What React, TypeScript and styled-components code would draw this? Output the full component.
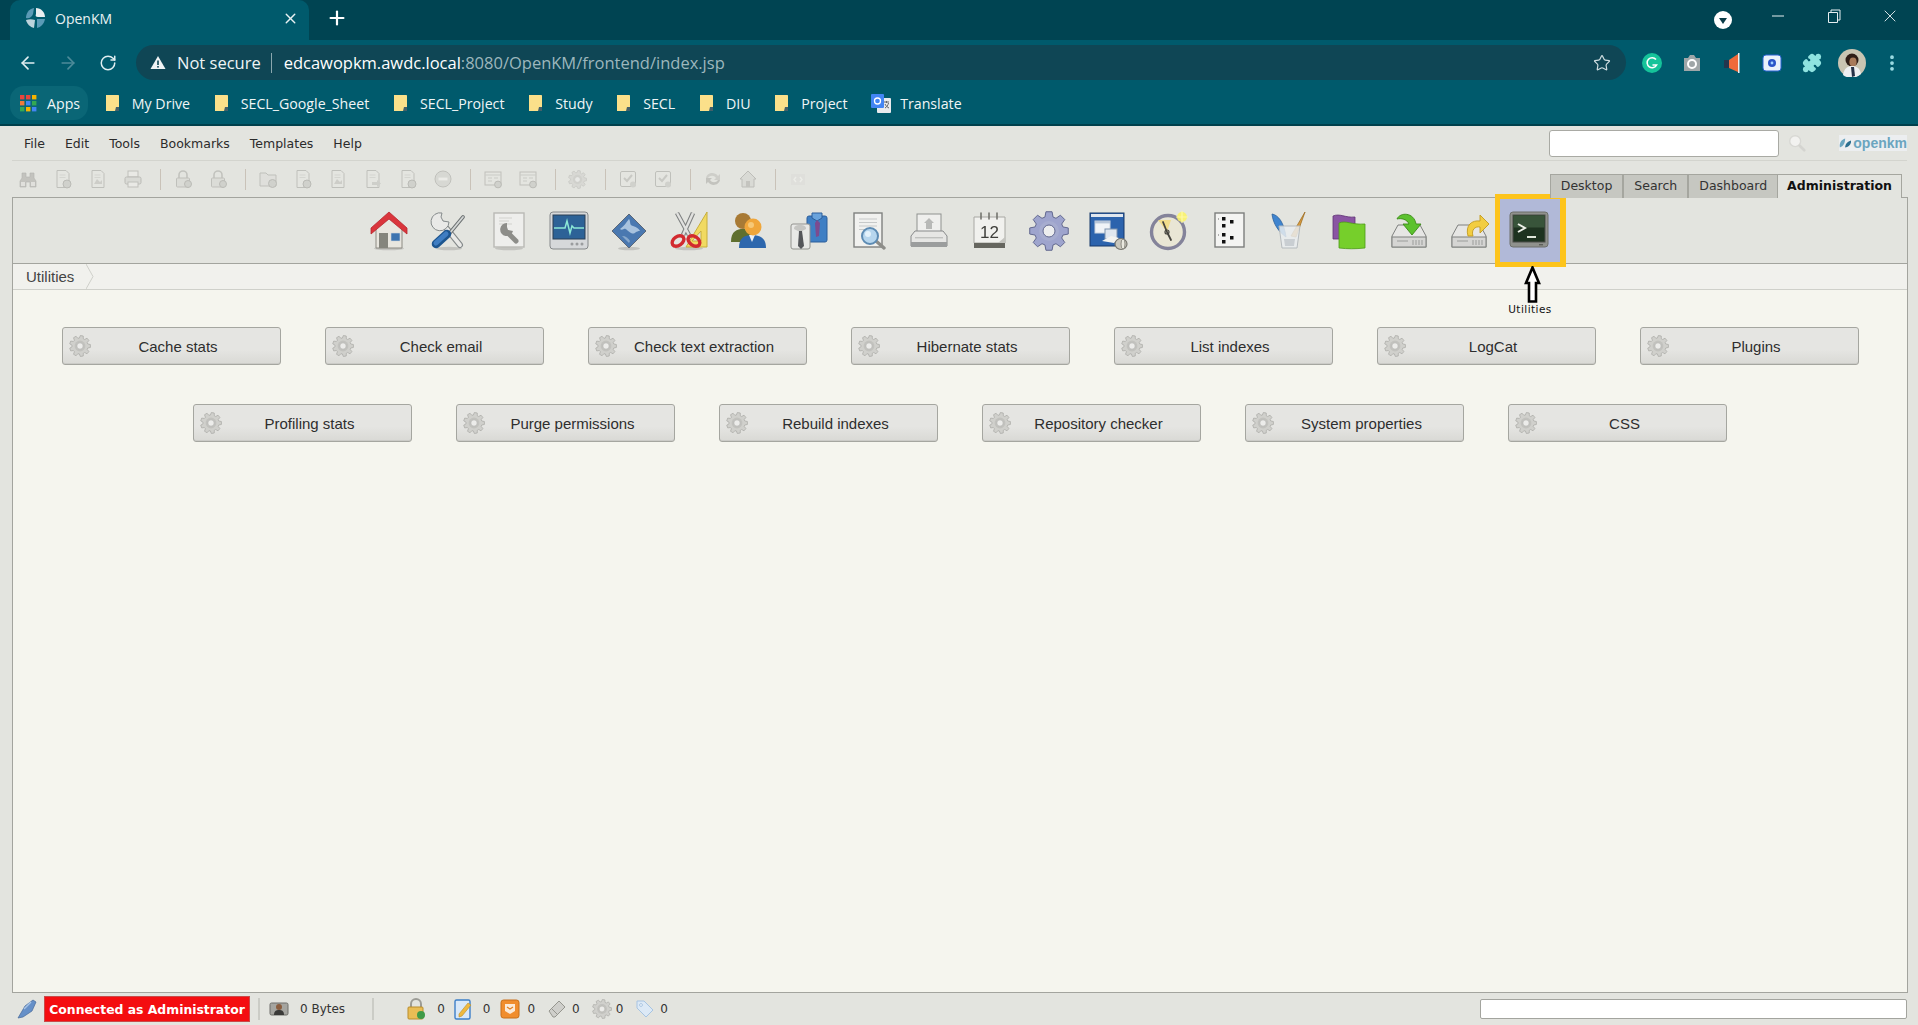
import React from "react";
import styled, { createGlobalStyle } from "styled-components";
import { ArrowLeft, ArrowRight, MoreVertical, Plus, Puzzle, RotateCw, Star, X } from "lucide-react";

const GlobalStyle = createGlobalStyle`
  html, body {
    margin: 0;
    height: 100%;
    overflow: hidden;
    background: #e3e4df;
  }
  #root {
    height: 100vh;
    display: flex;
    flex-direction: column;
  }
`;

const chromeFont = `"Open Sans", "Noto Sans", sans-serif`;
const appFont = `"DejaVu Sans", sans-serif`;

/* browser chrome */

const TabStrip = styled.div`
  height: 40px;
  flex: none;
  display: flex;
  align-items: stretch;
  background: #004452;
  font-family: ${chromeFont};
`;

const BrowserTab = styled.div`
  width: 299px;
  margin-left: 10px;
  padding: 0 10px 4px 14px;
  box-sizing: border-box;
  display: flex;
  align-items: center;
  gap: 9px;
  border-radius: 10px 10px 0 0;
  background: #005a6c;
  color: #e8f1f3;
  font-size: 14px;
`;

const TabTitle = styled.span`
  flex: 1;
`;

const NewTab = styled.div`
  width: 56px;
  display: flex;
  align-items: center;
  justify-content: center;
  padding-bottom: 4px;
  color: #fff;
`;

const WindowControls = styled.div`
  margin-left: auto;
  display: flex;
  align-items: center;
  color: #e6eff1;
`;

const ProfileCaret = styled.div`
  width: 18px;
  height: 18px;
  margin-right: 18px;
  border-radius: 50%;
  background: #fff;
  display: flex;
  align-items: center;
  justify-content: center;
  &::after {
    content: "";
    border-left: 4px solid transparent;
    border-right: 4px solid transparent;
    border-top: 6px solid #0a3c48;
    margin-top: 2px;
  }
`;

const WindowButton = styled.div`
  width: 56px;
  height: 30px;
  margin-bottom: 8px;
  display: flex;
  align-items: center;
  justify-content: center;
`;

const NavBar = styled.div`
  height: 45px;
  flex: none;
  display: flex;
  align-items: center;
  background: #005a6c;
  color: #fff;
  font-family: ${chromeFont};
`;

const NavButton = styled.div<{ $dim?: boolean; $first?: boolean }>`
  width: 40px;
  margin-left: ${({ $first }) => ($first ? 8 : 0)}px;
  display: flex;
  justify-content: center;
  color: ${({ $dim }) => ($dim ? "#4d8b99" : "#dfeef1")};
`;

const AddressBar = styled.div`
  width: 1490px;
  margin-left: 8px;
  height: 35px;
  padding: 0 15px 0 14px;
  box-sizing: border-box;
  display: flex;
  align-items: center;
  border-radius: 18px;
  background: #0f4655;
  font-size: 16.5px;
  white-space: nowrap;
`;

const NotSecure = styled.span`
  margin-left: 11px;
  color: #eef4f5;
`;

const AddressDivider = styled.span`
  width: 1px;
  height: 20px;
  margin: 0 12px 0 10px;
  background: #8aa7ae;
`;

const Host = styled.span`
  color: #fff;
`;

const UrlRest = styled.span`
  color: #9db7bd;
`;

const StarSlot = styled.div`
  margin-left: auto;
  display: flex;
  color: #cfdde0;
`;

const ExtensionSlots = styled.div`
  margin-left: 6px;
  display: flex;
`;

const ExtensionSlot = styled.div`
  width: 40px;
  display: flex;
  align-items: center;
  justify-content: center;
`;

const BookmarksBar = styled.div`
  height: 41px;
  flex: none;
  display: flex;
  align-items: center;
  padding: 0 0 3px 10px;
  box-sizing: border-box;
  gap: 23.7px;
  background: #005a6c;
  border-bottom: 2px solid #00404c;
  color: #f0f6f7;
  font-family: ${chromeFont};
  font-size: 14.2px;
`;

const Bookmark = styled.div<{ $apps?: boolean; $tight?: boolean }>`
  display: flex;
  align-items: center;
  gap: ${({ $tight }) => ($tight ? 9 : 12)}px;
  white-space: nowrap;
  ${({ $apps }) =>
    $apps &&
    `
    gap: 10px;
    height: 34px;
    padding: 0 8px 0 10px;
    margin-right: -7px;
    border-radius: 14px;
    background: #0a6676;
  `}
`;

/* application */

const MenuRow = styled.div`
  height: 34px;
  flex: none;
  margin: 0 11px 0 12px;
  display: flex;
  align-items: center;
  border-bottom: 1px solid #d3d4ce;
  font-family: ${appFont};
  font-size: 12.5px;
  color: #2b2b2b;
`;

const MenuList = styled.div`
  display: flex;
  gap: 20px;
  padding-left: 12px;
`;

const SearchBox = styled.div`
  margin-left: auto;
  width: 230px;
  height: 27px;
  box-sizing: border-box;
  border: 1px solid #a9aaa4;
  border-radius: 3px;
  background: #fff;
`;

const SearchGlyph = styled.div`
  width: 36px;
  margin-right: 24px;
  display: flex;
  justify-content: center;
`;

const Logo = styled.div`
  width: 68px;
  display: flex;
  align-items: center;
  gap: 2px;
  font-family: "Liberation Sans", sans-serif;
  font-size: 14px;
  font-weight: 700;
  color: #6ba5bf;
  background: #eceef0;
`;

const ToolRow = styled.div`
  height: 36px;
  flex: none;
  display: flex;
  align-items: center;
  padding-left: 10px;
`;

const ToolCell = styled.div`
  width: 35px;
  display: flex;
  justify-content: center;
  opacity: 0.55;
`;

const ToolSep = styled.div`
  width: 1px;
  height: 21px;
  margin: 0 4.5px 0 9.5px;
  background: #c9c2b8;
`;

const TabBar = styled.div`
  margin-left: auto;
  margin-right: 16px;
  align-self: flex-end;
  display: flex;
`;

const ModeTab = styled.div<{ $active?: boolean }>`
  height: 24px;
  padding: 0 ${({ $active }) => ($active ? 9 : 10)}px 2px;
  display: flex;
  align-items: center;
  box-sizing: border-box;
  border: 1px solid #a5a69f;
  border-bottom: none;
  border-left-width: ${({ $active }) => ($active ? 0 : 1)}px;
  background: ${({ $active }) => ($active ? "#e3e4df" : "#c6c7c1")};
  font-family: ${appFont};
  font-size: 12.5px;
  font-weight: ${({ $active }) => ($active ? 700 : 400)};
  color: ${({ $active }) => ($active ? "#111" : "#333")};
  margin-bottom: -1px;
  position: relative;
  z-index: 1;
`;

const Panel = styled.div`
  flex: 1;
  min-height: 0;
  margin: 0 10px 0 12px;
  display: flex;
  flex-direction: column;
  border: 1px solid #a3a49e;
  background: #f5f5ee;
`;

const AdminBar = styled.div`
  height: 65px;
  flex: none;
  padding-right: 2px;
  display: flex;
  justify-content: center;
  background: #e3e4df;
  border-bottom: 1px solid #a3a49e;
`;

const AdminCell = styled.div`
  width: 60px;
  position: relative;
  display: flex;
  align-items: center;
  justify-content: center;
`;

const AdminGlyph = styled.div`
  position: relative;
  z-index: 1;
  display: flex;
  filter: blur(0.35px);
`;

const Highlight = styled.div`
  position: absolute;
  left: -4px;
  top: -4px;
  width: 71px;
  height: 73px;
  box-sizing: border-box;
  border: 5px solid #fdc41c;
  border-right-width: 6px;
  background: #b1b9d8;
`;

const CalloutArrow = styled.svg`
  position: absolute;
  left: 25px;
  top: 68px;
  z-index: 2;
`;

const CalloutLabel = styled.div`
  position: absolute;
  left: 1px;
  right: -1px;
  top: 105px;
  z-index: 2;
  text-align: center;
  font-family: ${appFont};
  font-size: 10.5px;
  letter-spacing: 0.45px;
  color: #111;
`;

const Crumbs = styled.div`
  height: 25px;
  flex: none;
  display: flex;
  align-items: center;
  padding-left: 13px;
  gap: 12px;
  background: #f1f1ed;
  border-bottom: 1px solid #cfd0ca;
  font-family: "Liberation Sans", sans-serif;
  font-size: 15px;
  color: #444;
`;

const UtilityGrid = styled.div`
  padding: 37px 40px 0;
  display: flex;
  flex-wrap: wrap;
  justify-content: center;
  align-content: flex-start;
  gap: 39px 44px;
`;

const UtilityButton = styled.div`
  width: 219px;
  height: 38px;
  padding-right: 22px;
  box-sizing: border-box;
  display: grid;
  grid-template-columns: 36px 1fr;
  align-items: center;
  border: 1px solid #a5a6a0;
  border-radius: 3px;
  background: linear-gradient(#e5e5e2 60%, #d9d9d5);
  box-shadow: inset 0 -1px 0 #cbcbc7;
  font-family: "Liberation Sans", sans-serif;
  font-size: 15px;
  color: #2e2e2e;
  text-align: center;
  svg {
    justify-self: end;
    margin-right: 8px;
  }
`;

const StatusBar = styled.div`
  height: 32px;
  flex: none;
  display: flex;
  align-items: center;
  font-family: ${appFont};
  font-size: 12px;
  color: #333;
`;

const PlugSlot = styled.div`
  width: 44px;
  display: flex;
  justify-content: center;
  padding-left: 10px;
  box-sizing: border-box;
`;

const ConnectedBadge = styled.div`
  width: 206px;
  height: 26px;
  display: flex;
  align-items: center;
  justify-content: center;
  box-sizing: border-box;
  border: 1px solid #c94a4a;
  background: #f40d10;
  color: #fff;
  font-size: 12.4px;
  font-weight: 700;
  white-space: nowrap;
`;

const StatusSep = styled.div<{ $before: number; $after: number }>`
  width: 2px;
  height: 22px;
  margin: 0 ${({ $after }) => $after}px 0 ${({ $before }) => $before}px;
  background: #cbccc6;
`;

const StatusItem = styled.div<{ $gap: number; $next: number }>`
  display: flex;
  align-items: center;
  gap: ${({ $gap }) => $gap}px;
  margin-right: ${({ $next }) => $next}px;
`;

const StatusInput = styled.div`
  margin-left: auto;
  margin-right: 11px;
  width: 427px;
  height: 20px;
  box-sizing: border-box;
  border: 1px solid #a3a49e;
  border-radius: 2px;
  background: #fff;
`;

/* drawings */

const gearPath = (c: number, outer: number, inner: number, teeth: number) => {
  const parts: string[] = [];
  const step = (Math.PI * 2) / teeth;
  const pt = (r: number, a: number) => `${(c + r * Math.cos(a)).toFixed(2)} ${(c + r * Math.sin(a)).toFixed(2)}`;
  for (let i = 0; i < teeth; i++) {
    const a = i * step;
    parts.push(pt(inner, a - step * 0.36), pt(outer, a - step * 0.2), pt(outer, a + step * 0.2), pt(inner, a + step * 0.36));
  }
  return `M${parts.join("L")}Z`;
};

const GearGlyph = ({ size = 22 }: { size?: number }) => (
  <svg width={size} height={size} viewBox="0 0 22 22">
    <path d={gearPath(11, 10.5, 8, 9)} fill="#d0d0cc" stroke="#adada9" strokeWidth="0.8" />
    <circle cx="11" cy="11" r="5.4" fill="#c2c2be" />
    <circle cx="11" cy="11" r="3.2" fill="#ececea" stroke="#adada9" strokeWidth="0.6" />
  </svg>
);

const Shadow = ({ rx = 15 }: { rx?: number }) => <ellipse cx="20" cy="37.5" rx={rx} ry="1.8" fill="#000" opacity="0.14" />;

const Svg40 = ({ children }: { children: React.ReactNode }) => (
  <svg width="40" height="40" viewBox="0 0 40 40">
    {children}
  </svg>
);

const adminIcons: React.ReactNode[] = [
  <Svg40 key="home">
    <Shadow />
    <path d="M7 17 20 7 33 17V37H7Z" fill="#e8e6df" stroke="#8c8a82" />
    <rect x="10" y="22" width="9" height="15" fill="#85857d" />
    <rect x="22" y="22" width="9" height="8" fill="#3d74b0" stroke="#cfd6dc" strokeWidth="0.6" />
    <path d="M20 1 38 17 38 23 20 8 2 23 2 17Z" fill="#da353c" stroke="#b5272d" strokeWidth="0.8" />
  </Svg40>,
  <Svg40 key="tools">
    <Shadow rx={13} />
    <path d="M31 34 14 13" stroke="#84898a" strokeWidth="6" strokeLinecap="round" />
    <path d="M31 34 14 13" stroke="#e9e9e7" strokeWidth="3.8" strokeLinecap="round" />
    <path d="M13 2a9 9 0 1 0 7 9l-6-1-2-4z" fill="#e9e9e7" stroke="#84898a" />
    <path d="M20 23 34 6" stroke="#6c7172" strokeWidth="3.6" strokeLinecap="round" />
    <path d="M20 23 34 6" stroke="#d4d7d6" strokeWidth="1.8" strokeLinecap="round" />
    <path d="M7 33 18 23" stroke="#1d558f" strokeWidth="8.5" strokeLinecap="round" />
    <path d="M7 32 17 23" stroke="#3f7dc2" strokeWidth="5" strokeLinecap="round" />
  </Svg40>,
  <Svg40 key="report">
    <Shadow rx={14} />
    <rect x="5" y="2" width="30" height="34" fill="#eeeeec" stroke="#b9b9b5" strokeWidth="1.4" />
    <path d="M10 7h13M10 10h10M10 13h13" stroke="#d2d2ce" strokeWidth="1.2" />
    <path d="M27 30 19 22" stroke="#8d8d89" strokeWidth="5" strokeLinecap="round" />
    <path d="M18 12a6.5 6.5 0 1 0 6 8l-5-1-1-3z" fill="#8d8d89" />
  </Svg40>,
  <Svg40 key="monitor">
    <rect x="1" y="1" width="38" height="37" rx="3" fill="#d6d8da" stroke="#85888a" />
    <rect x="4" y="4" width="32" height="24" fill="#2d6297" stroke="#2a3f55" />
    <path d="M5 17h11l2-7 3 12 2-7 2 2h10" fill="none" stroke="#8be8d6" strokeWidth="1.5" />
    <circle cx="23" cy="33" r="1.5" fill="#9a9c9e" />
    <circle cx="28" cy="33" r="1.5" fill="#9a9c9e" />
    <circle cx="33" cy="33" r="1.5" fill="#9a9c9e" />
  </Svg40>,
  <Svg40 key="diamond">
    <Shadow rx={11} />
    <path d="M20 3 37 20 20 37 3 20Z" fill="#4a78b0" stroke="#5d6877" />
    <path d="M20 8c2 3 0 6 4 7s6 3 7 5c-5 0-5 4-9 2s-5-5-7-4-3 1-4 0c4-3 6-6 9-10Z" fill="#a8c2de" />
    <path d="M13 25c4 0 6 2 8 5l-1 2-7-7Z" fill="#88a8cb" />
  </Svg40>,
  <Svg40 key="cut">
    <Shadow rx={14} />
    <path d="M38 1V36H17Z" fill="#f1da62" stroke="#c7ae3c" />
    <path d="M32 20V30H23Z" fill="#e3e4df" stroke="#c7ae3c" />
    <path d="M8 2 20 24M24 2 14 24" stroke="#7e8080" strokeWidth="4.5" />
    <path d="M8 2 20 24M24 2 14 24" stroke="#e1e1df" strokeWidth="2.4" />
    <ellipse cx="9" cy="30" rx="6.5" ry="4.4" transform="rotate(-35 9 30)" fill="none" stroke="#d22a2f" strokeWidth="3.4" />
    <ellipse cx="25" cy="30" rx="6.5" ry="4.4" transform="rotate(35 25 30)" fill="none" stroke="#d22a2f" strokeWidth="3.4" />
  </Svg40>,
  <Svg40 key="users">
    <circle cx="14" cy="10" r="8" fill="#a87a35" />
    <path d="M2 31c0-11 6-13 12-13s12 2 12 13Z" fill="#5f6f2e" />
    <path d="M10 37c0-10 5-13 13-13s14 3 14 13Z" fill="#2d67ad" />
    <path d="M20 24h6l-3 7Z" fill="#eef0f3" />
    <circle cx="24" cy="16" r="8.5" fill="#f0a63a" />
    <circle cx="22" cy="14" r="3" fill="#f6c877" />
  </Svg40>,
  <Svg40 key="shirts">
    <rect x="18" y="5" width="20" height="26" rx="2" fill="#3f7fc4" stroke="#2d5f9b" />
    <path d="M23 2h10v5l-5 3-5-3Z" fill="#6aa3dc" stroke="#2d5f9b" />
    <path d="M28 9l-2 3 1 14 3-1 1-13Z" fill="#7d4b8f" />
    <rect x="2" y="13" width="19" height="25" rx="2" fill="#e8e8e6" stroke="#92928e" />
    <path d="M11 14c-4 0-6 1-6 4l6 3 6-3c0-3-2-4-6-4Z" fill="#c5c5c2" />
    <path d="M10 20h3l2 15-3 3-3-3Z" fill="#55565a" />
  </Svg40>,
  <Svg40 key="lookup">
    <rect x="5" y="2" width="28" height="34" fill="#f1f1ef" stroke="#7f817f" strokeWidth="1.4" />
    <path d="M10 8h18M10 11.5h18M10 15h18M10 18.5h10" stroke="#c7c9c9" />
    <path d="M27 30 35 37" stroke="#8d8d89" strokeWidth="3.4" strokeLinecap="round" />
    <circle cx="21" cy="25" r="8" fill="#b7d6ee" stroke="#5d8bb3" strokeWidth="2" />
    <circle cx="19" cy="23" r="3" fill="#e3f1fb" />
  </Svg40>,
  <Svg40 key="scanner">
    <rect x="8" y="3" width="24" height="20" fill="#efefed" stroke="#8f918f" />
    <path d="M20 7 25 12H23V18H17V12H15Z" fill="#b8b9b7" />
    <path d="M6 20H34L38 25V35H2V25Z" fill="#e6e6e4" stroke="#87898a" />
    <rect x="2" y="31" width="36" height="5" fill="#9b9d9d" />
    <rect x="6" y="26" width="28" height="1.4" fill="#bfc0be" />
  </Svg40>,
  <Svg40 key="calendar">
    <path d="M5 6H36V32H5Z" fill="#f1f1ee" stroke="#a8a8a3" />
    <path d="M5 32H36V37H5Z" fill="#66665f" />
    <path d="M12 2v6M20 2v6M28 2v6" stroke="#6e6e68" strokeWidth="1.5" strokeLinecap="round" />
    <text x="20.5" y="27" textAnchor="middle" fontFamily="Liberation Sans, sans-serif" fontSize="17" fill="#3e3e3a">
      12
    </text>
    <path d="M36 26v6h-7Z" fill="#c4c4bf" />
  </Svg40>,
  <svg key="gear" width="40" height="40" viewBox="0 0 40 40">
    <path d={gearPath(20, 19.5, 14.5, 8)} fill="#9ea4cd" stroke="#62688f" />
    <circle cx="20" cy="20" r="10" fill="#a6accf" />
    <circle cx="20" cy="20" r="6" fill="#ecedee" stroke="#62688f" />
  </svg>,
  <Svg40 key="backup">
    <rect x="1" y="2" width="34" height="33" fill="#2c63ad" stroke="#17396b" />
    <rect x="2" y="3" width="32" height="3" fill="#dfe6ef" />
    <rect x="6" y="10" width="15" height="12" fill="#f0f3f7" stroke="#c8d2de" />
    <rect x="6" y="10" width="15" height="2.4" fill="#b7c5d8" />
    <rect x="16" y="18" width="12" height="10" fill="#dfe6ef" stroke="#7f93ae" />
    <path d="M13 30 22 25 30 27 25 32Z" fill="#f2f2f0" />
    <ellipse cx="32" cy="33" rx="6" ry="5.5" fill="#c9c7bd" stroke="#77766f" strokeWidth="1.2" />
    <ellipse cx="34" cy="33" rx="2" ry="5" fill="#e9e8df" stroke="#77766f" strokeWidth="0.8" />
  </Svg40>,
  <Svg40 key="clock">
    <circle cx="19" cy="21" r="16.5" fill="#e9e6d5" stroke="#84839a" strokeWidth="3.4" />
    <path d="M9 9H22L18 21Z" fill="#f1dd8b" />
    <path d="M18 21 14 11M18 21 22 29" stroke="#46453f" strokeWidth="1.8" strokeLinecap="round" />
    <circle cx="18" cy="21" r="2" fill="none" stroke="#46453f" strokeWidth="1.2" />
    <circle cx="33" cy="6" r="5" fill="#fbf36a" opacity="0.9" />
    <path d="M33 0v12M27 6h12" stroke="#fdf8a8" strokeWidth="1.2" />
  </Svg40>,
  <Svg40 key="list">
    <rect x="6" y="2" width="29" height="34" fill="#f4f4f2" stroke="#7c7e7c" strokeWidth="1.4" />
    <rect x="13" y="6" width="3.5" height="3.5" fill="#111" />
    <rect x="21" y="9" width="3.5" height="3.5" fill="#111" />
    <rect x="13" y="13" width="3.5" height="3.5" fill="#111" />
    <rect x="13" y="22" width="3.5" height="3.5" fill="#111" />
    <rect x="21" y="25" width="3.5" height="3.5" fill="#111" />
    <rect x="13" y="29" width="3.5" height="3.5" fill="#111" />
    <path d="M9 8h1M9 24h1" stroke="#666" />
  </Svg40>,
  <Svg40 key="glass">
    <path d="M3 3c6 1 12 8 14 23-7-5-13-13-14-23Z" fill="#3f84cf" stroke="#2b5f9b" strokeWidth="0.8" />
    <path d="M36 1 27 26l-5-1Z" fill="#d99b3d" stroke="#9e6f24" strokeWidth="0.8" />
    <path d="M10 15H31L28 37H13Z" fill="#e9ecee" fillOpacity="0.85" stroke="#b5babd" />
    <path d="M15 28h11l-1 7H16Z" fill="#c9ced2" />
  </Svg40>,
  <Svg40 key="flags">
    <path d="M4 5c7-3 12 2 22 1v22H4Z" fill="#8a55a3" stroke="#5f3474" strokeWidth="0.8" />
    <path d="M10 12c7-3 12 2 26 1v24c-10 1-17 1-26 0Z" fill="#76cf2b" stroke="#4c9a16" strokeWidth="0.8" />
  </Svg40>,
  <Svg40 key="import">
    <path d="M3 25 9 14H31L37 25V36H3Z" fill="#e6e6e4" stroke="#7e807e" />
    <rect x="3" y="26" width="34" height="10" fill="#d5d5d3" stroke="#7e807e" />
    <path d="M8 30h11M24 29v5M27 29v5M30 29v5M33 29v5" stroke="#9b9d9b" />
    <path d="M8 8c3-7 17-7 19 5h5l-9 11-9-11h6c-2-5-8-6-12-5Z" fill="#5cc22e" stroke="#3b8a17" strokeWidth="0.9" />
  </Svg40>,
  <Svg40 key="export">
    <path d="M3 25 9 14H31L37 25V36H3Z" fill="#e6e6e4" stroke="#7e807e" />
    <rect x="3" y="26" width="34" height="10" fill="#d5d5d3" stroke="#7e807e" />
    <path d="M8 30h11M24 29v5M27 29v5M30 29v5M33 29v5" stroke="#9b9d9b" />
    <path d="M19 25c-3-11 4-16 12-15V4l9 9-9 9v-6c-5-1-9 3-7 9Z" fill="#f2cd41" stroke="#c39b1d" strokeWidth="0.9" />
  </Svg40>,
  <Svg40 key="terminal">
    <rect x="1" y="1" width="38" height="35" rx="3" fill="#8f918d" stroke="#6d6f6b" />
    <rect x="4" y="4" width="32" height="27" fill="#1e3320" stroke="#4c4e4a" />
    <rect x="4.5" y="4.5" width="31" height="12" fill="#38543a" />
    <path d="M9 13 16 17 9 21" fill="none" stroke="#eef2ea" strokeWidth="2" />
    <path d="M18 26h9" stroke="#dfe6da" strokeWidth="2" />
    <rect x="30" y="33" width="4" height="1.4" fill="#5d5f5b" />
  </Svg40>,
];

const GrayDoc = ({ mark }: { mark?: string }) => (
  <svg width="20" height="20" viewBox="0 0 20 20">
    <path d="M4 1.5H13L16 4.5V18.5H4Z" fill="#e6e6e2" stroke="#a3a39e" />
    <path d="M6.5 6h6M6.5 8.5h6" stroke="#c9c9c5" />
    {mark === "image" && <path d="M6 15l3-5 3 3 2-2v4Z" fill="#bcbcb7" />}
    {mark === "add" && <circle cx="14" cy="15" r="4" fill="#c2c2bd" stroke="#9a9a95" />}
    {mark === "arrow" && <path d="M9 13h5v-2l4 3.5-4 3.5v-2H9Z" fill="#bebeb9" />}
  </svg>
);

const ToolGlyphs: Record<string, React.ReactNode> = {
  binoculars: (
    <svg width="20" height="20" viewBox="0 0 20 20">
      <path d="M4 4h4v4h4V4h4v5l2 3v6h-6v-5H8v5H2v-6l2-3Z" fill="#a9a9a4" stroke="#8f8f8a" strokeWidth="0.6" />
      <rect x="3" y="13" width="4" height="4" fill="#dededa" />
      <rect x="13" y="13" width="4" height="4" fill="#dededa" />
    </svg>
  ),
  printer: (
    <svg width="20" height="20" viewBox="0 0 20 20">
      <rect x="5" y="2" width="10" height="6" fill="#eeeeea" stroke="#a3a39e" />
      <rect x="2" y="8" width="16" height="7" rx="1.5" fill="#d2d2ce" stroke="#9a9a95" />
      <rect x="5" y="13" width="10" height="5" fill="#eeeeea" stroke="#a3a39e" />
    </svg>
  ),
  lock: (
    <svg width="20" height="20" viewBox="0 0 20 20">
      <path d="M6 9V6a4 4 0 0 1 8 0v3" fill="none" stroke="#a8a8a3" strokeWidth="1.6" />
      <rect x="3.5" y="9" width="13" height="9" rx="1" fill="#d6d6d1" stroke="#a3a39e" />
      <circle cx="15" cy="15" r="3.5" fill="#c2c2bd" stroke="#9a9a95" />
    </svg>
  ),
  folder: (
    <svg width="20" height="20" viewBox="0 0 20 20">
      <path d="M2 4h6l2 2h8v11H2Z" fill="#dcdcd8" stroke="#a3a39e" />
      <circle cx="14.5" cy="14.5" r="4" fill="#c2c2bd" stroke="#9a9a95" />
    </svg>
  ),
  minus: (
    <svg width="20" height="20" viewBox="0 0 20 20">
      <circle cx="10" cy="10" r="8" fill="#cfcfcb" stroke="#a3a39e" />
      <rect x="5.5" y="8.6" width="9" height="2.8" fill="#f2f2ee" />
    </svg>
  ),
  table: (
    <svg width="20" height="20" viewBox="0 0 20 20">
      <rect x="2" y="3" width="16" height="13" fill="#e6e6e2" stroke="#a3a39e" />
      <path d="M2 6h16M5 9h4M5 12h4M11 9h4" stroke="#b8b8b3" />
      <circle cx="15" cy="15.5" r="3.4" fill="#c2c2bd" stroke="#9a9a95" />
    </svg>
  ),
  gear: <GearGlyph size={19} />,
  check: (
    <svg width="20" height="20" viewBox="0 0 20 20">
      <rect x="2.5" y="2.5" width="15" height="15" rx="1.5" fill="#e6e6e2" stroke="#a3a39e" />
      <path d="M6 9l3 3 5-6" fill="none" stroke="#b3b3ae" strokeWidth="2" />
      <circle cx="15" cy="15.5" r="3" fill="#c2c2bd" />
    </svg>
  ),
  refresh: (
    <svg width="20" height="20" viewBox="0 0 20 20">
      <path d="M3 9c1-5 8-7 12-2l2-2v6h-6l2-2c-2-3-6-3-8 0Z" fill="#bdbdb8" />
      <path d="M17 11c-1 5-8 7-12 2l-2 2V9h6l-2 2c2 3 6 3 8 0Z" fill="#a9a9a4" />
    </svg>
  ),
  house: (
    <svg width="20" height="20" viewBox="0 0 20 20">
      <path d="M10 2 18 10H16V18H4V10H2Z" fill="#d2d2ce" stroke="#9f9f9a" />
      <rect x="8" y="12" width="4" height="6" fill="#ababa6" />
    </svg>
  ),
  tag: (
    <svg width="20" height="20" viewBox="0 0 20 20">
      <rect x="3" y="5" width="14" height="11" fill="#dcdcd8" />
      <path d="M8 8 6 10.5 8 13M12 8l2 2.5L12 13" fill="none" stroke="#f4f4f0" strokeWidth="1.4" />
    </svg>
  ),
};

const toolbar: string[][] = [
  ["binoculars", "doc:add", "doc:image", "printer"],
  ["lock", "lock"],
  ["folder", "doc:add", "doc:image", "doc:arrow", "doc:add", "minus"],
  ["table", "table"],
  ["gear"],
  ["check", "check"],
  ["refresh", "house"],
  ["tag"],
];

const renderTool = (name: string) =>
  name.startsWith("doc:") ? <GrayDoc mark={name.slice(4)} /> : ToolGlyphs[name];

const FolderIcon = () => (
  <svg width="15" height="18" viewBox="0 0 15 18">
    <path d="M1 1H13C13.6 1 14 1.4 14 2V17H1Z" fill="#fbe08a" />
    <path d="M11 13h3v4h-4Z" fill="#43606a" />
  </svg>
);

const AppsIcon = () => (
  <svg width="17" height="17" viewBox="0 0 17 17">
    {[
      ["#e8453c", "#e8453c", "#f4b400"],
      ["#ef7a3a", "#4285f4", "#34a853"],
      ["#34a853", "#f4b400", "#4285f4"],
    ].map((row, y) =>
      row.map((c, x) => <rect key={`${x}-${y}`} x={x * 6} y={y * 6} width="4.4" height="4.4" fill={c} />)
    )}
  </svg>
);

const TranslateIcon = () => (
  <svg width="20" height="20" viewBox="0 0 20 20">
    <rect x="6" y="5" width="14" height="15" rx="1" fill="#e8eaed" />
    <path d="M13 9h5M15.5 8v2M14 15c2-1 3-3 3.5-5M14 11c1 2 2 3 4 4" stroke="#5f6368" fill="none" />
    <rect x="0" y="1" width="13" height="14" rx="1" fill="#4285f4" />
    <circle cx="6.5" cy="8" r="3" fill="none" stroke="#fff" strokeWidth="1.3" />
  </svg>
);

const Favicon = () => (
  <svg width="22" height="22" viewBox="0 0 22 22">
    <path d="M12 1c5 0 9 4 9 9h-7c-2 0-3-1-2-3Z" fill="#e9eef0" />
    <path d="M10 1C5 2 2 6 2 11c3 1 6-1 7-4Z" fill="#5a9ab6" />
    <path d="M2 13c1 4 4 7 8 8l1-8c-3-1-6-1-9 0Z" fill="#bcd3dc" />
    <path d="M13 12h8c-1 5-4 8-8 9Z" fill="#5a9ab6" />
  </svg>
);

const bookmarks = ["My Drive", "SECL_Google_Sheet", "SECL_Project", "Study", "SECL", "DIU", "Project"];
const menus = ["File", "Edit", "Tools", "Bookmarks", "Templates", "Help"];
const modes = ["Desktop", "Search", "Dashboard", "Administration"];
const utilities = [
  "Cache stats",
  "Check email",
  "Check text extraction",
  "Hibernate stats",
  "List indexes",
  "LogCat",
  "Plugins",
  "Profiling stats",
  "Purge permissions",
  "Rebuild indexes",
  "Repository checker",
  "System properties",
  "CSS",
];

const App = () => {
  return (
    <>
      <GlobalStyle />
      <TabStrip>
        <BrowserTab>
          <Favicon />
          <TabTitle>OpenKM</TabTitle>
          <X size={17} strokeWidth={2} />
        </BrowserTab>
        <NewTab>
          <Plus size={22} strokeWidth={2.4} />
        </NewTab>
        <WindowControls>
          <ProfileCaret />
          <WindowButton>
            <svg width="14" height="14" viewBox="0 0 14 14">
              <path d="M1 7h12" stroke="currentColor" />
            </svg>
          </WindowButton>
          <WindowButton>
            <svg width="14" height="14" viewBox="0 0 14 14" fill="none" stroke="currentColor">
              <path d="M1.5 3.5h9v10h-9z" />
              <path d="M4 3V1h9v10h-2" />
            </svg>
          </WindowButton>
          <WindowButton>
            <X size={20} strokeWidth={1.1} />
          </WindowButton>
        </WindowControls>
      </TabStrip>
      <NavBar>
        <NavButton $first>
          <ArrowLeft size={20} />
        </NavButton>
        <NavButton $dim>
          <ArrowRight size={20} />
        </NavButton>
        <NavButton>
          <RotateCw size={18} />
        </NavButton>
        <AddressBar>
          <svg width="16" height="15" viewBox="0 0 16 15">
            <path d="M8 1 15.5 14H.5Z" fill="#f0f4f5" />
            <rect x="7.2" y="5.5" width="1.6" height="4.5" fill="#0f4655" />
            <rect x="7.2" y="11" width="1.6" height="1.6" fill="#0f4655" />
          </svg>
          <NotSecure>Not secure</NotSecure>
          <AddressDivider />
          <Host>edcawopkm.awdc.local</Host>
          <UrlRest>:8080/OpenKM/frontend/index.jsp</UrlRest>
          <StarSlot>
            <Star size={18} strokeWidth={1.6} />
          </StarSlot>
        </AddressBar>
        <ExtensionSlots>
          <ExtensionSlot>
            <svg width="20" height="20" viewBox="0 0 20 20">
              <circle cx="10" cy="10" r="10" fill="#15c39a" />
              <path d="M14 6.5a5 5 0 1 0 .6 5.5H10.5" fill="none" stroke="#fff" strokeWidth="1.6" />
            </svg>
          </ExtensionSlot>
          <ExtensionSlot>
            <svg width="20" height="18" viewBox="0 0 20 18">
              <path d="M2 4h4l2-3h4l2 3h4v13H2Z" fill="#9fa6a8" />
              <circle cx="10" cy="10" r="4" fill="none" stroke="#fff" strokeWidth="2" />
            </svg>
          </ExtensionSlot>
          <ExtensionSlot>
            <svg width="18" height="20" viewBox="0 0 18 20">
              <path d="M1 7h5v8H1Z" fill="#23364e" />
              <path d="M6 7 15 1V19L6 15Z" fill="#ef6a3a" />
              <path d="M15 0h1.5v20H15Z" fill="#f0f0f0" />
            </svg>
          </ExtensionSlot>
          <ExtensionSlot>
            <svg width="20" height="18" viewBox="0 0 20 18">
              <rect x="1" y="1" width="18" height="16" rx="3" fill="#eaf2fa" stroke="#2a63d4" />
              <circle cx="10" cy="9" r="4" fill="#2a55c8" />
              <circle cx="10" cy="9" r="1.4" fill="#9fd0ff" />
            </svg>
          </ExtensionSlot>
          <ExtensionSlot>
            <Puzzle size={20} fill="#8fe3e0" color="#8fe3e0" />
          </ExtensionSlot>
          <ExtensionSlot>
            <svg width="28" height="28" viewBox="0 0 28 28">
              <circle cx="14" cy="14" r="14" fill="#c9c4b2" />
              <circle cx="14" cy="11" r="6.5" fill="#2e1c16" />
              <ellipse cx="15" cy="13" rx="3.6" ry="4.4" fill="#a87a5a" />
              <path d="M5 26c1-7 5-9 9-9s8 2 9 8a14 14 0 0 1-18 1Z" fill="#eef0f2" />
              <path d="M13 18l3 0 1 9-3 1Z" fill="#263248" />
            </svg>
          </ExtensionSlot>
          <ExtensionSlot>
            <MoreVertical size={20} color="#9fdfe6" strokeWidth={2.5} />
          </ExtensionSlot>
        </ExtensionSlots>
      </NavBar>
      <BookmarksBar>
        <Bookmark $apps>
          <AppsIcon />
          Apps
        </Bookmark>
        {bookmarks.map((name) => (
          <Bookmark key={name}>
            <FolderIcon />
            {name}
          </Bookmark>
        ))}
        <Bookmark $tight>
          <TranslateIcon />
          Translate
        </Bookmark>
      </BookmarksBar>
      <MenuRow>
        <MenuList>
          {menus.map((m) => (
            <span key={m}>{m}</span>
          ))}
        </MenuList>
        <SearchBox />
        <SearchGlyph>
          <svg width="20" height="20" viewBox="0 0 22 22">
            <circle cx="9" cy="9" r="6" fill="#f2f2f0" stroke="#d8d8d4" strokeWidth="1.5" />
            <path d="M14 14l5 5" stroke="#d4d4d0" strokeWidth="3" strokeLinecap="round" />
          </svg>
        </SearchGlyph>
        <Logo>
          <svg width="14" height="12" viewBox="0 0 14 12">
            <path d="M1 11C0 6 3 2 7 1 7 6 5 10 1 11Z" fill="#6ba5bf" />
            <path d="M7 11c0-4 3-7 7-8 0 4-3 8-7 8Z" fill="#2c6f8f" />
          </svg>
          openkm
        </Logo>
      </MenuRow>
      <ToolRow>
        {toolbar.map((group, i) => (
          <React.Fragment key={i}>
            {i > 0 && <ToolSep />}
            {group.map((name, j) => (
              <ToolCell key={j}>{renderTool(name)}</ToolCell>
            ))}
          </React.Fragment>
        ))}
        <TabBar>
          {modes.map((m) => (
            <ModeTab key={m} $active={m === "Administration"}>
              {m}
            </ModeTab>
          ))}
        </TabBar>
      </ToolRow>
      <Panel>
        <AdminBar>
          {adminIcons.map((icon, i) => (
            <AdminCell key={i}>
              {i === adminIcons.length - 1 && (
                <>
                  <Highlight />
                  <CalloutArrow width="17" height="37" viewBox="0 0 17 37">
                    <path d="M8.5 1.5 15 17H12V35.5H5V17H2Z" fill="#fff" stroke="#000" strokeWidth="2.6" />
                  </CalloutArrow>
                  <CalloutLabel>Utilities</CalloutLabel>
                </>
              )}
              <AdminGlyph>{icon}</AdminGlyph>
            </AdminCell>
          ))}
        </AdminBar>
        <Crumbs>
          Utilities
          <svg width="8" height="25" viewBox="0 0 8 25">
            <path d="M0 0 7 12.5 0 25" fill="none" stroke="#cfd0ca" />
          </svg>
        </Crumbs>
        <UtilityGrid>
          {utilities.map((u) => (
            <UtilityButton key={u}>
              <GearGlyph />
              {u}
            </UtilityButton>
          ))}
        </UtilityGrid>
      </Panel>
      <StatusBar>
        <PlugSlot>
          <svg width="22" height="22" viewBox="0 0 22 22">
            <path d="M2 20 9 8l8-6 3 2-4 9-9 6Z" fill="#6690c8" stroke="#46689a" strokeWidth="0.7" />
            <path d="M8 11l7-7" stroke="#a8c4e6" strokeWidth="1.5" />
          </svg>
        </PlugSlot>
        <ConnectedBadge>Connected as Administrator</ConnectedBadge>
        <StatusSep $before={8} $after={8} />
        <StatusItem $gap={10} $next={0}>
          <svg width="22" height="20" viewBox="0 0 22 20">
            <rect x="2" y="4" width="18" height="12" rx="1.5" fill="#a5a5a0" stroke="#6f6f6a" />
            <circle cx="11" cy="8" r="3" fill="#8a5d3e" />
            <path d="M6 16c0-4 2-5 5-5s5 1 5 5Z" fill="#3a3a38" />
          </svg>
          0 Bytes
        </StatusItem>
        <StatusSep $before={27} $after={32} />
        <StatusItem $gap={11} $next={8}>
          <svg width="20" height="22" viewBox="0 0 20 22">
            <path d="M5 10V6a5 5 0 0 1 10 0v4" fill="none" stroke="#9c9c96" strokeWidth="2" />
            <rect x="2" y="9" width="15" height="12" rx="1" fill="#e9bd55" stroke="#b98d2c" />
            <circle cx="15" cy="17" r="4" fill="#3f9a48" />
          </svg>
          0
        </StatusItem>
        <StatusItem $gap={10} $next={10}>
          <svg width="20" height="22" viewBox="0 0 20 22">
            <rect x="2" y="2" width="15" height="19" rx="1.5" fill="#d9e8f8" stroke="#3d7fc8" strokeWidth="1.4" />
            <path d="M6 16 15 5l3 2-9 11-3 1Z" fill="#efb93e" stroke="#b98d2c" strokeWidth="0.6" />
          </svg>
          0
        </StatusItem>
        <StatusItem $gap={7} $next={12}>
          <svg width="20" height="20" viewBox="0 0 20 20">
            <rect x="1" y="1" width="18" height="18" rx="2.5" fill="#f08d2d" stroke="#c86f18" />
            <path d="M5 5h10v7l-5 3-5-3Z" fill="#fbe9d6" />
            <path d="M7 8l3 2 3-2" fill="none" stroke="#e07f22" strokeWidth="1.2" />
          </svg>
          0
        </StatusItem>
        <StatusItem $gap={5} $next={12}>
          <svg width="20" height="20" viewBox="0 0 20 20">
            <path d="M2 12 12 2l6 6-10 10H6Z" fill="#cfcfcb" stroke="#96968f" />
            <path d="M5 10l5 5" stroke="#96968f" />
          </svg>
          0
        </StatusItem>
        <StatusItem $gap={4} $next={12}>
          <GearGlyph size={20} />
          0
        </StatusItem>
        <StatusItem $gap={5} $next={0}>
          <svg width="20" height="20" viewBox="0 0 20 20">
            <path d="M2 2h7l9 9-7 7-9-9Z" fill="#dce9f6" stroke="#a7c4e2" />
            <circle cx="6" cy="6" r="1.4" fill="#fff" stroke="#a7c4e2" />
          </svg>
          0
        </StatusItem>
        <StatusInput />
      </StatusBar>
    </>
  );
};

export default App;
